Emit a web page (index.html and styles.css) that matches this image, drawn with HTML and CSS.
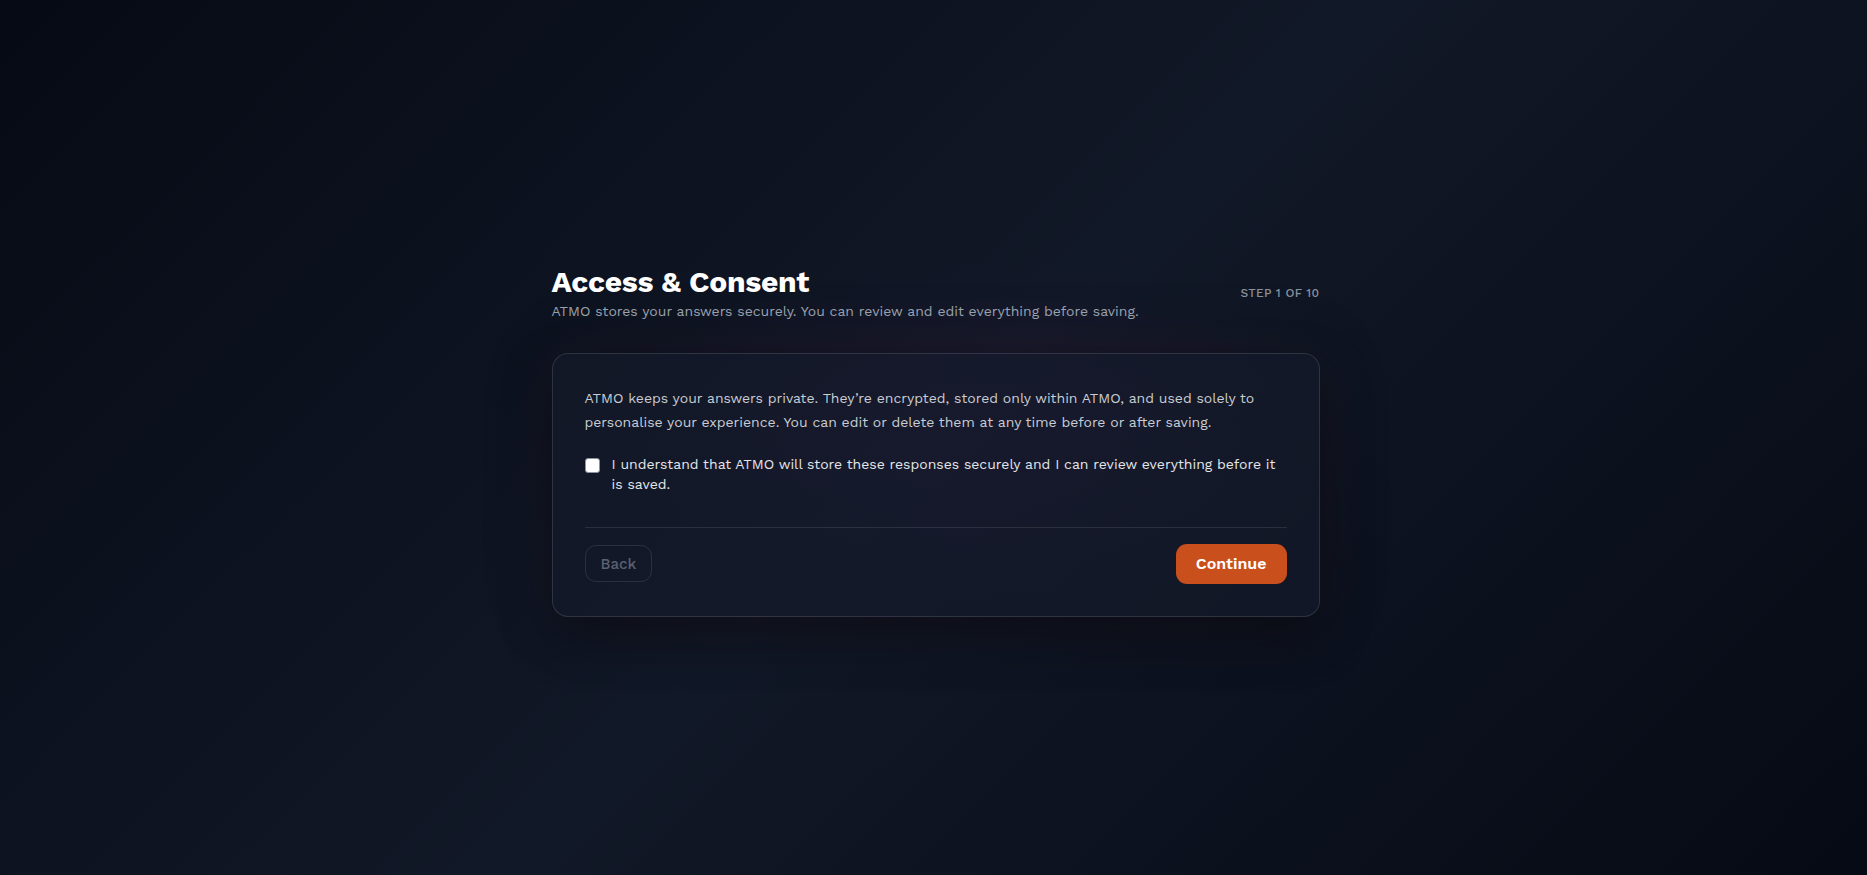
FILE: index.html
```html
<!DOCTYPE html>
<html lang="en">
<head>
<meta charset="utf-8">
<title>Access &amp; Consent</title>
<link rel="stylesheet" href="styles.css">
</head>
<body>
<main class="page">
  <section class="step">
    <header class="step-header">
      <div class="step-titles">
        <h1 class="step-title">Access &amp; Consent</h1>
        <p class="step-subtitle">ATMO stores your answers securely. You can review and edit everything before saving.</p>
      </div>
      <div class="step-count">STEP 1 OF 10</div>
    </header>
    <div class="card">
      <p class="card-text">ATMO keeps your answers private. They’re encrypted, stored only within ATMO, and used solely to personalise your experience. You can edit or delete them at any time before or after saving.</p>
      <label class="consent">
        <input type="checkbox" class="consent-box">
        <span class="consent-text">I understand that ATMO will store these responses securely and I can review everything before it is saved.</span>
      </label>
      <div class="card-actions">
        <button class="btn btn-back" type="button">Back</button>
        <button class="btn btn-continue" type="button">Continue</button>
      </div>
    </div>
  </section>
</main>
</body>
</html>
```
FILE: styles.css
```css
html, body {
  margin: 0;
  padding: 0;
  height: 100%;
}
body {
  font-family: "Work Sans", Inter, "Noto Sans", sans-serif;
  background:
    radial-gradient(ellipse 520px 260px at 52% 50%, rgba(60, 30, 80, 0.18), rgba(0,0,0,0) 70%),
    linear-gradient(135deg, #060a14 0%, #111827 50%, #060a14 100%);
  color: #fff;
}
.page {
  min-height: 100%;
  display: flex;
  align-items: center;
  justify-content: center;
  box-sizing: border-box;
  padding-top: 6px;
  padding-left: 4px;
}
.step {
  width: 768px;
}
.step-header {
  display: flex;
  align-items: center;
  justify-content: space-between;
}
.step-title {
  margin: 0;
  font-size: 30px;
  line-height: 34px;
  font-weight: 700;
  letter-spacing: -0.25px;
  color: #ffffff;
}
.step-subtitle {
  margin: 2px 0 0;
  font-size: 14px;
  line-height: 20px;
  color: #9aa1ae;
}
.step-count {
  font-size: 12px;
  letter-spacing: 0.4px;
  color: #8b919c;
  font-weight: 500;
}
.card {
  margin-top: 32px;
  padding: 32px;
  border: 1px solid rgba(255, 255, 255, 0.12);
  border-radius: 16px;
  background: rgba(22, 27, 44, 0.55);
  box-shadow: 0 20px 50px rgba(0, 0, 0, 0.35), 0 0 80px rgba(90, 30, 40, 0.12);
}
.card-text {
  margin: 0;
  font-size: 14px;
  line-height: 24px;
  color: #c9ccd3;
}
.consent {
  display: flex;
  align-items: flex-start;
  gap: 12px;
  margin-top: 20px;
  cursor: pointer;
}
.consent-box {
  appearance: none;
  -webkit-appearance: none;
  flex: none;
  width: 15px;
  height: 15px;
  margin: 4px 0 0;
  background: #ffffff;
  border: 1px solid #8d929b;
  border-radius: 3px;
  box-sizing: border-box;
}
.consent-text {
  font-size: 14px;
  line-height: 20px;
  color: #e3e5ea;
}
.card-actions {
  display: flex;
  justify-content: space-between;
  align-items: center;
  margin-top: 33px;
  padding-top: 16px;
  border-top: 1px solid rgba(255, 255, 255, 0.1);
}
.btn {
  font-family: inherit;
  border-radius: 11px;
  cursor: pointer;
}
.btn-back {
  height: 37px;
  padding: 0 15px;
  background: transparent;
  border: 1px solid rgba(255, 255, 255, 0.1);
  color: #5b6171;
  font-size: 15px;
  font-weight: 500;
}
.btn-continue {
  height: 40px;
  padding: 0 20px;
  background: #c94f1c;
  border: none;
  color: #ffffff;
  font-size: 16px;
  font-weight: 600;
}
```
